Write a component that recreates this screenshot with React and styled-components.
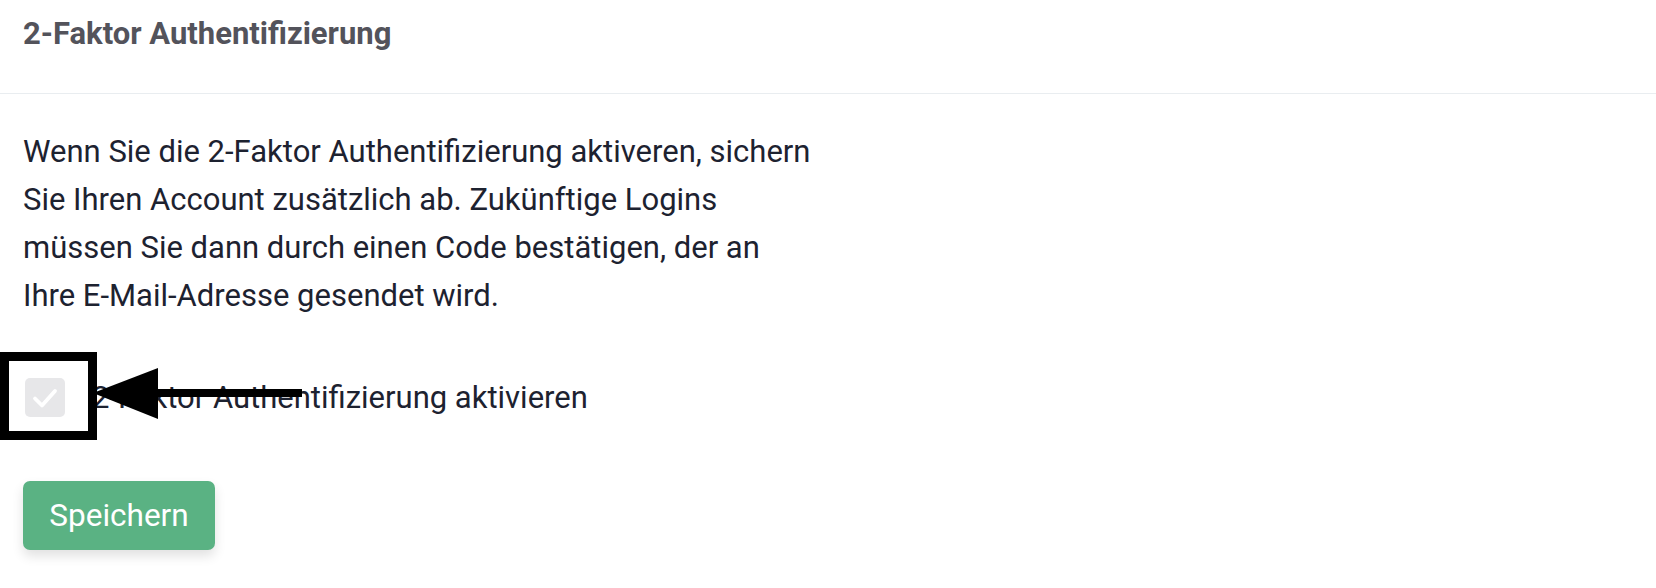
import styled, { createGlobalStyle } from "styled-components";

const GlobalStyle = createGlobalStyle`
  body {
    margin: 0;
    background: #ffffff;
    font-family: Roboto, "Liberation Sans", sans-serif;
  }
`;

const Card = styled.div`
  position: relative;
  width: 1656px;
  height: 588px;
  background: #fff;
`;

const Header = styled.div`
  height: 94px;
  padding: 14px 23px 0;
  border-bottom: 1px solid #e9edf0;
  box-sizing: border-box;
`;

const Title = styled.h2`
  margin: 0;
  font-size: 31px;
  line-height: 40px;
  font-weight: 700;
  color: #53535b;
`;

const Body = styled.div`
  padding: 34px 23px 0;
  display: flex;
  flex-direction: column;
  align-items: flex-start;
`;

const Text = styled.p`
  margin: 0;
  max-width: 791px;
  font-size: 31px;
  line-height: 48px;
  color: #1d2230;
`;

const CheckRow = styled.label`
  margin-top: 58px;
  display: flex;
  align-items: center;
  gap: 27px;
  padding-left: 2px;
  font-size: 31px;
  color: #1d2230;
`;

const Box = styled.span`
  width: 40px;
  height: 39px;
  border-radius: 5px;
  background: #e7e7e9;
  display: flex;
  align-items: center;
  justify-content: center;
`;

const SaveButton = styled.button`
  margin-top: 64px;
  width: 192px;
  height: 69px;
  border: none;
  border-radius: 7px;
  background: #5ab283;
  color: #fff;
  font-family: Roboto, "Liberation Sans", sans-serif;
  font-size: 31.5px;
  box-shadow: 0 6px 12px rgba(0, 0, 0, 0.12);
`;

const Frame = styled.div`
  position: absolute;
  left: 0;
  top: 352px;
  width: 97px;
  height: 88px;
  border: 9px solid #000;
  box-sizing: border-box;
`;

const Arrow = styled.svg`
  position: absolute;
  left: 90px;
  top: 368px;
`;

export default function App() {
  return (
    <Card>
      <GlobalStyle />
      <Header>
        <Title>2-Faktor Authentifizierung</Title>
      </Header>
      <Body>
        <Text>
          Wenn Sie die 2-Faktor Authentifizierung aktiveren, sichern Sie Ihren
          Account zusätzlich ab. Zukünftige Logins müssen Sie dann durch einen
          Code bestätigen, der an Ihre E-Mail-Adresse gesendet wird.
        </Text>
        <CheckRow>
          <Box>
            <svg width="26" height="22" viewBox="0 0 26 22" fill="none">
              <path d="M3 11.5l7 7L23 4" stroke="#fff" strokeWidth="3.8" strokeLinecap="round" strokeLinejoin="round" />
            </svg>
          </Box>
          2-Faktor Authentifizierung aktivieren
        </CheckRow>
        <SaveButton>Speichern</SaveButton>
      </Body>
      <Frame />
      <Arrow width="215" height="52" viewBox="0 0 215 52">
        <polygon points="3,25 68,0 68,51" fill="#000" />
        <rect x="60" y="21" width="152" height="8" fill="#000" />
      </Arrow>
    </Card>
  );
}
